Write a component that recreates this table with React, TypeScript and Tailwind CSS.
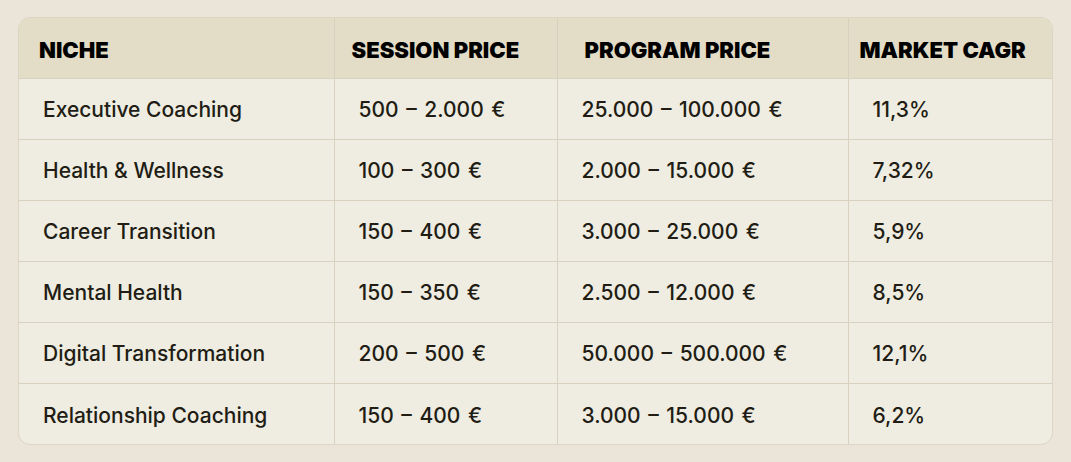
import React from 'react';

const rows = [
    { niche: 'Executive Coaching', session: '500 – 2.000 €', program: '25.000 – 100.000 €', cagr: '11,3%' },
    { niche: 'Health & Wellness', session: '100 – 300 €', program: '2.000 – 15.000 €', cagr: '7,32%' },
    { niche: 'Career Transition', session: '150 – 400 €', program: '3.000 – 25.000 €', cagr: '5,9%' },
    { niche: 'Mental Health', session: '150 – 350 €', program: '2.500 – 12.000 €', cagr: '8,5%' },
    { niche: 'Digital Transformation', session: '200 – 500 €', program: '50.000 – 500.000 €', cagr: '12,1%' },
    { niche: 'Relationship Coaching', session: '150 – 400 €', program: '3.000 – 15.000 €', cagr: '6,2%' },
];

export default function App() {
    return (
        <div className="w-[1071px] h-[462px] bg-[#ebe4d8] pt-[17px] px-[18px] font-['Inter',sans-serif] text-[#211d14]">
            <div className="overflow-hidden rounded-xl border border-[#dcd5c3] bg-[#efece1]">
                <table className="w-full border-collapse text-left">
                    <thead>
                        <tr className="h-[60px] bg-[#e3dcc6] border-b border-[#d8d1c0]">
                            <th className="w-[315px] pl-[20px] pt-[5px] text-[22px] font-black text-black uppercase">Niche</th>
                            <th className="w-[223px] pl-[17px] pt-[5px] text-[22px] font-black text-black uppercase border-l border-[#d8d1c0]">Session Price</th>
                            <th className="w-[291px] pl-[27px] pt-[5px] text-[22px] font-black text-black uppercase border-l border-[#d8d1c0]">Program Price</th>
                            <th className="pl-[11px] pt-[5px] text-[22px] font-black text-black uppercase border-l border-[#d8d1c0]">Market CAGR</th>
                        </tr>
                    </thead>
                    <tbody>
                        {rows.map((r, i) => (
                            <tr key={i} className={i < rows.length - 1 ? 'h-[61px] border-b border-[#d8d1c0]' : 'h-[61px]'}>
                                <td className="pl-[24px] pt-[3px] text-[21px] font-medium">{r.niche}</td>
                                <td className="pl-[24px] pt-[3px] text-[21px] font-medium border-l border-[#d8d1c0] [word-spacing:2px]">{r.session}</td>
                                <td className="pl-[24px] pt-[3px] text-[21px] font-medium border-l border-[#d8d1c0] [word-spacing:2px]">{r.program}</td>
                                <td className="pl-[24px] pt-[3px] text-[21px] font-medium border-l border-[#d8d1c0]">{r.cagr}</td>
                            </tr>
                        ))}
                    </tbody>
                </table>
            </div>
        </div>
    );
}
